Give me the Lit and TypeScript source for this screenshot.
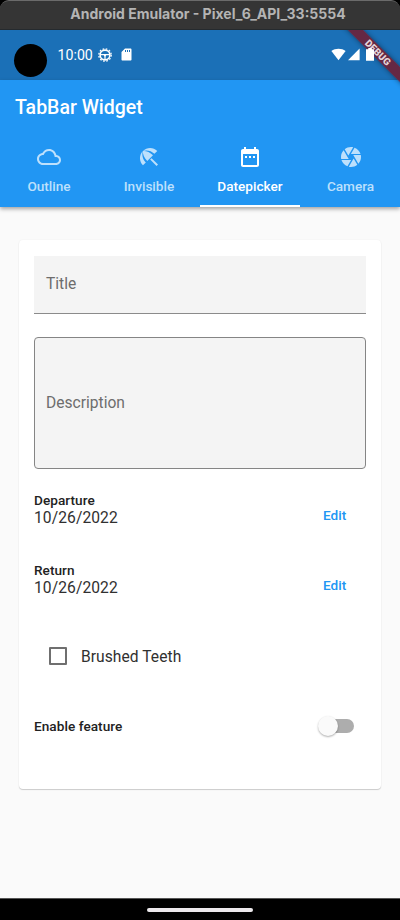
import { LitElement, html, css, svg } from "lit";
import { customElement, property } from "lit/decorators.js";

const ICONS: Record<string, string> = {
  cloud:
    "M19.35 10.04C18.67 6.59 15.64 4 12 4 9.11 4 6.6 5.64 5.35 8.04 2.34 8.36 0 10.91 0 14c0 3.31 2.69 6 6 6h13c2.76 0 5-2.24 5-5 0-2.64-2.05-4.78-4.65-4.96zM19 18H6c-2.21 0-4-1.79-4-4 0-2.05 1.53-3.76 3.56-3.97l1.07-.11.5-.95C8.08 7.14 9.94 6 12 6c2.62 0 4.88 1.86 5.39 4.43l.3 1.5 1.53.11c1.56.1 2.78 1.41 2.78 2.96 0 1.65-1.35 3-3 3z",
  beach:
    "M13.127 14.56l1.43-1.43 6.44 6.443L19.57 21zM17.42 8.83l2.86-2.86c-3.95-3.95-10.35-3.96-14.3-.02 3.93-1.3 8.31-.25 11.44 2.88zM5.95 5.98c-3.94 3.95-3.93 10.35.02 14.3l2.86-2.86C5.7 14.29 4.65 9.91 5.95 5.98zM5.97 5.96l-.01.01c-.38 3.01 1.17 6.88 4.3 10.02l5.73-5.73c-3.13-3.13-7.01-4.68-10.02-4.3z",
  date:
    "M9 11H7v2h2v-2zm4 0h-2v2h2v-2zm4 0h-2v2h2v-2zm2-7h-1V2h-2v2H8V2H6v2H5c-1.11 0-1.99.9-1.99 2L3 20c0 1.1.89 2 2 2h14c1.1 0 2-.9 2-2V6c0-1.1-.9-2-2-2zm0 16H5V9h14v11z",
  camera:
    "M9.4 10.5l4.77-8.26C13.47 2.09 12.75 2 12 2c-2.4 0-4.6.85-6.32 2.25l3.66 6.35.06-.1zM21.54 9c-.92-2.92-3.15-5.26-6-6.34L11.88 9h9.66zm.26 1h-7.49l.29.5 4.76 8.25C21 16.97 22 14.61 22 12c0-.69-.07-1.35-.2-2zM8.54 12l-3.9-6.75C3.01 7.03 2 9.39 2 12c0 .69.07 1.35.2 2h7.49l-1.15-2zm-6.08 3c.92 2.92 3.15 5.26 6 6.34L12.12 15H2.46zm11.27 0l-3.9 6.76c.7.15 1.42.24 2.17.24 2.4 0 4.6-.85 6.32-2.25l-3.66-6.35-.93 1.6z",
};

@customElement("window-title")
class WindowTitle extends LitElement {
  static styles = css`
    :host { display: block; height: 30px; background: #000; }
    .bar {
      height: 30px; box-sizing: border-box; border-top: 1px solid #6b6b6b;
      border-radius: 9px 9px 0 0; background: #353535; color: #b4b4b4;
      border-bottom: 1px solid #252a2e; padding-left: 16px;
      font: 700 14px/26px Inter, sans-serif; text-align: center; white-space: nowrap;
    }
  `;
  render() {
    return html`<div class="bar">Android Emulator - Pixel_6_API_33:5554</div>`;
  }
}

@customElement("status-bar")
class StatusBar extends LitElement {
  static styles = css`
    :host { display: flex; height: 50px; background: #1b70b7; align-items: center; color: #fff; }
    .camera { width: 33px; height: 33px; border-radius: 50%; background: #000; margin: 10px 10px 0 14px; }
    .time { font: 400 14.2px/20px Roboto, sans-serif; width: 40px; margin-left: 0.5px; }
    svg { display: block; fill: #fff; }
    .gear, .card { margin-bottom: 1px; }
    .gear { margin-left: 0; }
    .card { margin-left: 9px; }
    .right { margin-left: auto; display: flex; align-items: center; margin: 0 26px 1px auto; position: relative; z-index: 2; }
    .signal { margin-left: 2px; }
    .battery { margin-left: 6px; }
  `;
  render() {
    return html`
      <div class="camera"></div>
      <span class="time">10:00</span>
      <svg class="gear" width="14" height="14" viewBox="0 0 14 14">
        <circle cx="7" cy="7" r="4.9" fill="none" stroke="#fff" stroke-width="1.6"></circle>
        <circle cx="7" cy="7" r="6.2" fill="none" stroke="#fff" stroke-width="1.3" stroke-dasharray="1.7 1.546"></circle>
        <path d="M2 6h10v1.3H8.2L7.6 8.7V12H6.4V8.7L5.8 7.3H2z"></path>
      </svg>
      <svg class="card" width="11" height="13" viewBox="0 0 11 13">
        <path fill-rule="evenodd" d="M4 .5h5.4c.7 0 1.1.4 1.1 1.1v9.8c0 .7-.4 1.1-1.1 1.1H1.6c-.7 0-1.1-.4-1.1-1.1V4zM4 2v1.900h1V2zm2 0v1.900h1V2zm2 0v1.900h1V2z"></path>
      </svg>
      <div class="right">
        <svg width="15" height="13" viewBox="0 0 15 13"><path d="M.4 3.100C4.300.1 10.700.1 14.600 3.100L7.500 12.300z"></path></svg>
        <svg class="signal" width="12" height="13" viewBox="0 0 12 13"><path d="M0 12.300L11.600.500V12.300z"></path></svg>
        <svg class="battery" width="8" height="13" viewBox="0 0 8 13"><path d="M2.300 0h3.400v1.200H8V12.700H0V1.200h2.300z"></path></svg>
      </div>
    `;
  }
}

@customElement("tab-item")
class TabItem extends LitElement {
  @property() icon = "cloud";
  @property() label = "";
  @property({ type: Boolean, reflect: true }) active = false;
  static styles = css`
    :host {
      display: flex; flex-direction: column; align-items: center; box-sizing: border-box;
      height: 71px; padding-top: 9px; color: #bde0fc; border-bottom: 2px solid transparent;
    }
    :host([active]) { color: #fff; border-bottom-color: #fff; }
    svg { display: block; width: 24px; height: 24px; fill: currentColor; }
    .label { font: 500 13.6px/16px Roboto, sans-serif; margin-top: 9px; }
  `;
  render() {
    return html`
      <svg viewBox="0 0 24 24">${svg`<path d=${ICONS[this.icon]}></path>`}</svg>
      <span class="label">${this.label}</span>
    `;
  }
}

@customElement("date-row")
class DateRow extends LitElement {
  @property() label = "";
  @property() value = "";
  static styles = css`
    :host { display: flex; align-items: flex-start; justify-content: space-between; height: 36px; }
    .name { font: 500 13.6px/16px Roboto, sans-serif; letter-spacing: 0.05px; color: #222; }
    .value { font: 400 15.6px/19px Roboto, sans-serif; letter-spacing: 0.08px; color: #303030; padding-top: 1px; }
    .edit { font: 500 13.6px/16px Roboto, sans-serif; letter-spacing: 0.1px; color: #2196f3; padding: 15px 19.5px 0 0; }
  `;
  render() {
    return html`
      <div>
        <div class="name">${this.label}</div>
        <div class="value">${this.value}</div>
      </div>
      <span class="edit">Edit</span>
    `;
  }
}

@customElement("app-root")
class AppRoot extends LitElement {
  static styles = css`
    :host {
      display: flex; flex-direction: column; position: relative; width: 400px; height: 920px;
      overflow: hidden; background: #fafafa; font-family: Roboto, sans-serif;
    }
    .appbar {
      height: 127px; background: #2196f3; display: flex; flex-direction: column;
      box-shadow: 0 2px 4px rgba(0, 0, 0, 0.35); flex: none;
    }
    .heading { font: 500 19.5px/56px Roboto, sans-serif; color: #fff; padding-left: 15px; }
    .tabs { display: grid; grid-template-columns: 98px 102px 100px 101px; margin-right: -1px; }
    .card {
      margin: 33px 19px 0; height: 549px; box-sizing: border-box; padding: 16px 15px 0;
      background: #fff; border-radius: 4px; flex: none;
      box-shadow: 0 1px 1px rgba(0, 0, 0, 0.18), 0 0 2px rgba(0, 0, 0, 0.06);
    }
    .field { background: #f4f4f4; color: #6d6d6d; font-size: 15.6px; box-sizing: border-box; padding-left: 12px; }
    .title { height: 58px; line-height: 56px; border-bottom: 1px solid #8b8b8b; }
    .description { height: 132px; line-height: 130px; border: 1px solid #858585; border-radius: 4px; margin-top: 23px; padding-left: 11px; }
    .departure { margin-top: 23px; }
    .return { margin-top: 34px; }
    .check { display: flex; align-items: center; height: 24px; margin: 46px 0 0 15px; }
    .box { width: 18px; height: 18px; box-sizing: border-box; border: 2px solid #6f6f6f; border-radius: 1px; }
    .check-label { margin: 2px 0 0 14px; font-size: 15.6px; letter-spacing: 0.05px; color: #303030; }
    .feature { display: flex; align-items: center; justify-content: space-between; height: 24px; margin-top: 46px; }
    .feature-label { font: 500 13.6px/16px Roboto, sans-serif; letter-spacing: 0.05px; color: #222; }
    .track {
      display: flex; align-items: center; width: 32px; height: 14px; border-radius: 7px;
      background: #adadad; margin-right: 12.5px;
    }
    .thumb {
      flex: none; width: 20px; height: 20px; border-radius: 50%; background: #fafafa; margin-left: -4px;
      box-shadow: 0 1px 2px rgba(0, 0, 0, 0.32);
    }
    .nav { margin-top: auto; height: 22px; background: #000; border-top: 1px solid #555; box-sizing: border-box; display: flex; justify-content: center; }
    .handle { width: 106px; height: 4px; border-radius: 2px; background: #ece9ec; margin-top: 9px; }
    .clip { position: absolute; top: 30px; right: 0; width: 80px; height: 80px; overflow: hidden; pointer-events: none; }
    .banner {
      position: absolute; left: -2px; top: 17px; width: 120px; height: 11px; transform: rotate(45deg);
      background: rgba(112, 30, 52, 0.88); box-shadow: 0 0 5px rgba(0, 0, 0, 0.45);
      color: #e4d5da; text-align: center; font: 900 9.9px/11px Roboto, sans-serif;
    }
  `;
  render() {
    return html`
      <window-title></window-title>
      <status-bar></status-bar>
      <header class="appbar">
        <div class="heading">TabBar Widget</div>
        <nav class="tabs">
          <tab-item icon="cloud" label="Outline"></tab-item>
          <tab-item icon="beach" label="Invisible"></tab-item>
          <tab-item icon="date" label="Datepicker" active></tab-item>
          <tab-item icon="camera" label="Camera"></tab-item>
        </nav>
      </header>
      <main class="card">
        <div class="field title">Title</div>
        <div class="field description">Description</div>
        <date-row class="departure" label="Departure" value="10/26/2022"></date-row>
        <date-row class="return" label="Return" value="10/26/2022"></date-row>
        <div class="check">
          <span class="box"></span>
          <span class="check-label">Brushed Teeth</span>
        </div>
        <div class="feature">
          <span class="feature-label">Enable feature</span>
          <span class="track"><span class="thumb"></span></span>
        </div>
      </main>
      <footer class="nav"><div class="handle"></div></footer>
      <div class="clip"><div class="banner">DEBUG</div></div>
    `;
  }
}
